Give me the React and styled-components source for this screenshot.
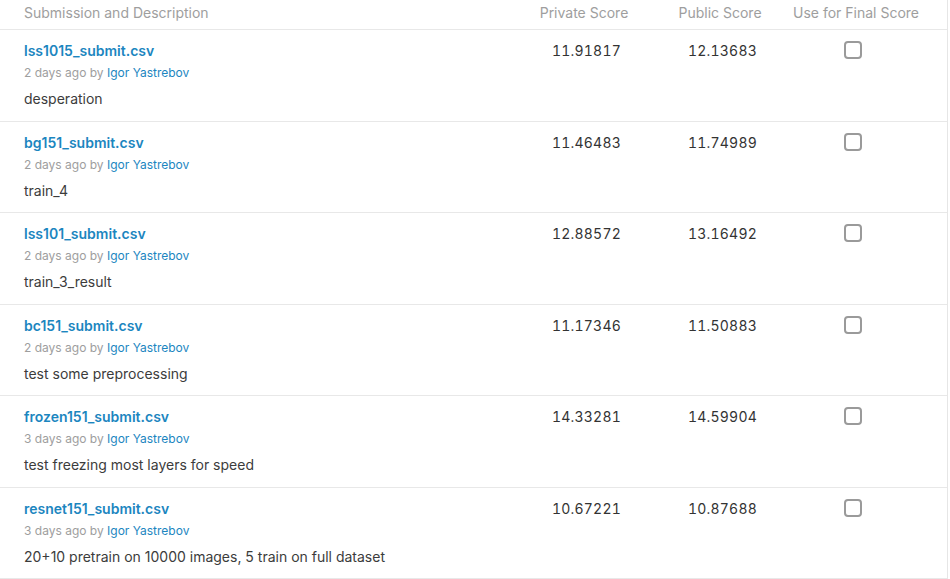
import React from "react";
import styled, { createGlobalStyle } from "styled-components";

const Global = createGlobalStyle`
  body {
    margin: 0;
    background: #ffffff;
    font-family: Inter, "Noto Sans", sans-serif;
  }
`;

// Outer table wrapper with the right edge line
const Table = styled.div`
  width: 947px;
  border-right: 1px solid #e6e6e6;
`;

const Row = styled.div`
  display: grid;
  grid-template-columns: 1fr 136px 136px 136px;
  padding: ${(p) => (p.head ? "3px 23px 6px 24px" : "11px 23px 11.5px 24px")};
  border-bottom: 1px solid #e8e8e8;
`;

const HeadCell = styled.div`
  font-size: 14px;
  line-height: 20px;
  color: #9e9e9e;
  text-align: ${(p) => (p.left ? "left" : "center")};
`;

const Info = styled.div`
  display: flex;
  flex-direction: column;
`;

const FileName = styled.a`
  font-size: 14px;
  line-height: 20px;
  font-weight: 600;
  color: #1c86bf;
  text-decoration: none;
`;

const Meta = styled.div`
  margin-top: 4px;
  font-size: 12px;
  line-height: 16px;
  color: #9e9e9e;

  a {
    color: #1c86bf;
    text-decoration: none;
  }
`;

const Desc = styled.div`
  margin-top: 8px;
  font-size: 14px;
  line-height: 20px;
  color: #3c3c3c;
`;

const Score = styled.div`
  font-size: 14px;
  line-height: 20px;
  color: #333333;
  text-align: center;
  font-variant-numeric: tabular-nums;
  letter-spacing: 0.2px;
  padding-left: 5px;
`;

const CheckCell = styled.div`
  display: flex;
  justify-content: center;
  padding-right: 6px;
`;

const Box = styled.span`
  width: 18px;
  height: 18px;
  box-sizing: border-box;
  border: 2px solid #9a9a9a;
  border-radius: 4px;
`;

const rows = [
  ["lss1015_submit.csv", "2 days ago", "desperation", "11.91817", "12.13683"],
  ["bg151_submit.csv", "2 days ago", "train_4", "11.46483", "11.74989"],
  ["lss101_submit.csv", "2 days ago", "train_3_result", "12.88572", "13.16492"],
  ["bc151_submit.csv", "2 days ago", "test some preprocessing", "11.17346", "11.50883"],
  ["frozen151_submit.csv", "3 days ago", "test freezing most layers for speed", "14.33281", "14.59904"],
  ["resnet151_submit.csv", "3 days ago", "20+10 pretrain on 10000 images, 5 train on full dataset", "10.67221", "10.87688"],
];

const App = () => (
  <>
    <Global />
    <Table>
      <Row head>
        <HeadCell left>Submission and Description</HeadCell>
        <HeadCell>Private Score</HeadCell>
        <HeadCell>Public Score</HeadCell>
        <HeadCell>Use for Final Score</HeadCell>
      </Row>
      {rows.map(([file, when, desc, priv, pub]) => (
        <Row key={file}>
          <Info>
            <FileName href="#">{file}</FileName>
            <Meta>
              {when} by <a href="#">Igor Yastrebov</a>
            </Meta>
            <Desc>{desc}</Desc>
          </Info>
          <Score>{priv}</Score>
          <Score>{pub}</Score>
          <CheckCell>
            <Box />
          </CheckCell>
        </Row>
      ))}
    </Table>
  </>
);

export default App;
